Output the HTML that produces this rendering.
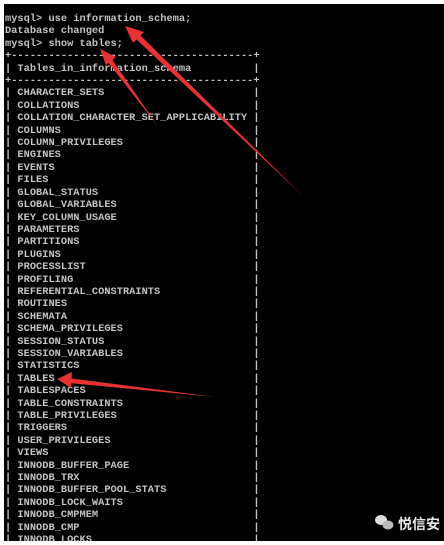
<!DOCTYPE html>
<html><head><meta charset="utf-8"><style>
html,body{margin:0;padding:0;background:#fff;width:444px;height:545px;overflow:hidden;position:relative}
#term{position:absolute;left:4px;top:4px;width:440px;height:537px;background:#000;overflow:hidden}
pre{margin:0;position:absolute;left:1px;top:9px;font-family:"Liberation Mono",monospace;font-weight:bold;font-size:10.3px;line-height:12.4px;color:#c4c4c4;letter-spacing:0.03px}
svg{position:absolute;left:0;top:0}
#logo{position:absolute;color:#e8e8e8;font-family:"Liberation Sans","Noto Sans CJK SC",sans-serif;font-size:14px;font-weight:bold}
</style></head><body>
<div id="term"><pre>mysql&gt; use information_schema;
Database changed
mysql&gt; show tables;
+---------------------------------------+
| Tables_in_information_schema          |
+---------------------------------------+
| CHARACTER_SETS                        |
| COLLATIONS                            |
| COLLATION_CHARACTER_SET_APPLICABILITY |
| COLUMNS                               |
| COLUMN_PRIVILEGES                     |
| ENGINES                               |
| EVENTS                                |
| FILES                                 |
| GLOBAL_STATUS                         |
| GLOBAL_VARIABLES                      |
| KEY_COLUMN_USAGE                      |
| PARAMETERS                            |
| PARTITIONS                            |
| PLUGINS                               |
| PROCESSLIST                           |
| PROFILING                             |
| REFERENTIAL_CONSTRAINTS               |
| ROUTINES                              |
| SCHEMATA                              |
| SCHEMA_PRIVILEGES                     |
| SESSION_STATUS                        |
| SESSION_VARIABLES                     |
| STATISTICS                            |
| TABLES                                |
| TABLESPACES                           |
| TABLE_CONSTRAINTS                     |
| TABLE_PRIVILEGES                      |
| TRIGGERS                              |
| USER_PRIVILEGES                       |
| VIEWS                                 |
| INNODB_BUFFER_PAGE                    |
| INNODB_TRX                            |
| INNODB_BUFFER_POOL_STATS              |
| INNODB_LOCK_WAITS                     |
| INNODB_CMPMEM                         |
| INNODB_CMP                            |
| INNODB_LOCKS                          |</pre></div>
<svg width="444" height="545" viewBox="0 0 444 545">
<g fill="#e63232">
<polygon points="303,196 136,39 140,35"/>
<polygon points="125,26 144,32 133,43"/>
<polygon points="157,125 107,61 111,58"/>
<polygon points="100,49 116,57 106,65"/>
<polygon points="215,397 68,378 69,383"/>
<polygon points="57,379 72,372 71,388"/>
</g>
<g fill="#ddd">
<ellipse cx="381" cy="520" rx="6" ry="5"/>
<ellipse cx="388" cy="525" rx="5.5" ry="4.5" fill="#bbb"/>
</g>
</svg>
<div id="logo" style="left:398px;top:514px">悦信安</div>
</body></html>
